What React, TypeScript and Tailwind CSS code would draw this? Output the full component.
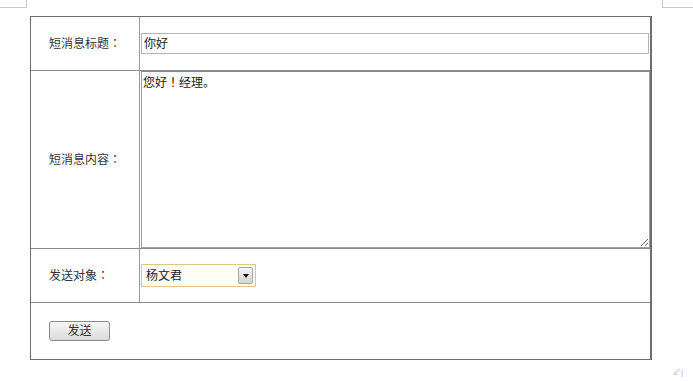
import React from "react";

export default function App() {
  const font = { fontFamily: '"Liberation Sans", "Noto Sans CJK JP", sans-serif' };
  return (
    <div className="relative w-[693px] h-[381px] bg-white text-[12px] text-[#333]" style={font}>
      {/* crop marks */}
      <div className="absolute left-0 top-0 w-[27px] h-[8px] border-r border-b border-[#c8c8c8]" />
      <div className="absolute left-[662px] top-0 w-[31px] h-[8px] border-l border-b border-[#c8c8c8]" />
      <div className="absolute left-[673px] top-[369px] text-[8px] text-[#aaa] leading-none">↙|</div>

      <div className="pt-[16px] pl-[30px]">
        <div className="w-[622px] h-[344px] border border-[#6e6e6e] border-r-2 flex flex-col">
          {/* row 1 */}
          <div className="flex h-[54px] border-b border-[#8a8a8a]">
            <div className="w-[109px] border-r border-[#9a9a9a] flex items-center pl-[18px]">短消息标题：</div>
            <div className="flex-1 flex items-center pl-px pr-[1px]">
              <div className="w-full h-[21px] border border-[#b4b4b4] flex items-center pl-[2px] text-[#222]">你好</div>
            </div>
          </div>
          {/* row 2 */}
          <div className="flex h-[178px] border-b border-[#8a8a8a]">
            <div className="w-[109px] border-r border-[#9a9a9a] flex items-center pl-[18px]">短消息内容：</div>
            <div className="flex-1 pl-px">
              <textarea
                className="w-full h-full border border-[#a0a0a0] border-t-[#8a8a8a] outline-none resize-y leading-[14px] px-[1px] pt-[4px] text-[12px] text-[#222]"
                style={font}
                defaultValue="您好！经理。"
              />
            </div>
          </div>
          {/* row 3 */}
          <div className="flex h-[54px] border-b border-[#8a8a8a]">
            <div className="w-[109px] border-r border-[#9a9a9a] flex items-center pl-[18px]">发送对象：</div>
            <div className="flex-1 flex items-center pl-px">
              <div className="w-[115px] h-[23px] border border-[#e2c48a] bg-[#fffdf6] flex items-center justify-between pl-[4px] pr-[2px] text-[#222]">
                <span>杨文君</span>
                <div className="w-[15px] h-[17px] border border-[#a8a8a8] rounded-[2px] bg-gradient-to-b from-[#f4f4f4] to-[#d4d4d4] flex items-center justify-center">
                  <div className="w-0 h-0 border-l-[3px] border-r-[3px] border-t-[4px] border-l-transparent border-r-transparent border-t-[#111]" />
                </div>
              </div>
            </div>
          </div>
          {/* row 4 */}
          <div className="flex-1 flex items-center pl-[18px]">
            <button
              className="w-[61px] h-[20px] border border-[#8a8a8a] rounded-[3px] bg-gradient-to-b from-[#f6f6f6] to-[#dcdcdc] text-[12px] text-[#333] leading-none"
              style={font}
            >
              发送
            </button>
          </div>
        </div>
      </div>
    </div>
  );
}
